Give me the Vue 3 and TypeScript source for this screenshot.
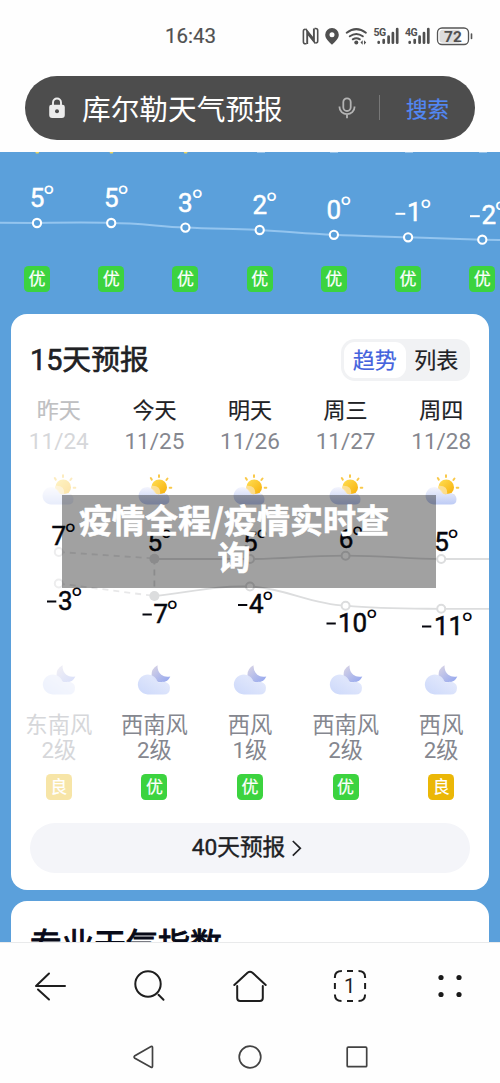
<script setup lang="ts">
interface Hour { x: number; y: number; minus?: number; digit: string }
interface Day {
  name: string; date: string; wind: string; level: string; air: string
  past?: boolean
}
interface Label { digits: string; minus?: number; x: number; y: number; w: number }

const hours: Hour[] = [
  { x: 37, y: 223, digit: '5' },
  { x: 111.2, y: 223, digit: '5' },
  { x: 185.4, y: 227.6, digit: '3' },
  { x: 259.7, y: 230, digit: '2' },
  { x: 333.9, y: 234.8, digit: '0' },
  { x: 408.1, y: 237.3, digit: '1', minus: 395.5 },
  { x: 482.3, y: 239.7, digit: '2', minus: 470 },
]

const days: Day[] = [
  { name: '昨天', date: '11/24', wind: '东南风', level: '2级', air: '良', past: true },
  { name: '今天', date: '11/25', wind: '西南风', level: '2级', air: '优' },
  { name: '明天', date: '11/26', wind: '西风', level: '1级', air: '优' },
  { name: '周三', date: '11/27', wind: '西南风', level: '2级', air: '优' },
  { name: '周四', date: '11/28', wind: '西风', level: '2级', air: '良' },
]

const labels: Label[] = [
  { digits: '7', x: 51.5, y: 545, w: 14 },
  { digits: '5', x: 147.5, y: 551, w: 14 },
  { digits: '5', x: 243, y: 551, w: 14 },
  { digits: '6', x: 338.7, y: 548, w: 14 },
  { digits: '5', x: 434.2, y: 551, w: 14 },
  { digits: '3', minus: 47, x: 58, y: 609.5, w: 14 },
  { digits: '7', minus: 142.5, x: 153.5, y: 622.5, w: 14 },
  { digits: '4', minus: 238, x: 249, y: 613, w: 14 },
  { digits: '10', minus: 326.5, x: 338, y: 631.5, w: 29 },
  { digits: '11', minus: 422, x: 434, y: 634.5, w: 28.5 },
]
</script>

<template>
  <div class="screen">
    <header class="top">
      <div class="status">
        <span class="clock">16:43</span>
        <svg class="signals" viewBox="300 24 175 24" width="175" height="24">
          <g fill="none" stroke="#505050">
            <path d="M306.500 43.700h-1.300q-1.800 0-1.800-2v-10.500q0-2 1.800-2M314.500 28.500h1.300q1.900 0 1.900 2v10.500q0 2-1.900 2" stroke-width="1.600" />
            <path d="M307.200 44V32l6.700 8.500V28.500" stroke-width="1.900" />
            <path d="M305.500 28.800l8.500 10.700M307.500 33.500l8 10" stroke-width="1.700" />
          </g>
          <g fill="#505050">
            <path d="M332 28a6.700 6.700 0 0 0-6.800 6.700c0 4.300 4.200 7.300 6.800 10 2.600-2.700 6.800-5.700 6.800-10A6.700 6.700 0 0 0 332 28zm0 4.300a2.500 2.500 0 1 1 0 5 2.500 2.500 0 0 1 0-5z" fill-rule="evenodd" />
            <circle cx="356.300" cy="42.500" r="2" />
            <path d="M362.700 40.200v4.600l-2.200-2.300zM364 40.200v4.600l2.200-2.300z" />
          </g>
          <g fill="none" stroke="#505050" stroke-width="2" stroke-linecap="round">
            <path d="M346.700 32.700q9.600-7.200 19.200 0M349.800 36.300q6.500-4.600 13 0M352.800 39.300q3.500-2.300 7 0" />
          </g>
          <g stroke="#505050" stroke-width="2.700" stroke-linecap="round">
            <path d="M378.700 42.200v.5M383.700 40v2.700M388.600 36.500v6.200M392.900 33v9.700M397.200 29v13.700" />
            <path d="M409.700 42.200v.5M414.700 40v2.700M419.600 36.500v6.200M424 33v9.700M428.300 29v13.700" />
          </g>
          <text class="net" x="373.500" y="36">5G</text>
          <text class="net" x="405" y="36">4G</text>
          <rect x="437.500" y="28" width="31" height="16.500" rx="4.500" fill="#fff" stroke="#555" stroke-width="1.300" />
          <path d="M443 29.800h16.500v13h-16.500q-3.600 0-3.600-3.500v-6q0-3.500 3.600-3.500z" fill="#dcdcdc" />
          <path d="M471.500 34v4.500" stroke="#555" stroke-width="1.600" stroke-linecap="round" />
          <text class="battery" x="453" y="41.700">72</text>
        </svg>
      </div>
      <div class="search">
        <svg class="lock" viewBox="0 0 18 22" width="18" height="22">
          <path d="M5 9V5.500a4 4 0 0 1 8 0V9" fill="none" stroke="#ececec" stroke-width="1.900" />
          <path d="M3.500 7.800h11q2.300 0 2.300 2.300v8q0 3-3 3H4.200q-3 0-3-3v-8q0-2.300 2.300-2.300z" fill="#ececec" />
          <circle cx="9" cy="14.300" r="2" fill="#4d4d4d" />
        </svg>
        <span class="query">库尔勒天气预报</span>
        <svg class="mic" viewBox="0 0 18 22" width="18" height="22" fill="none" stroke="#b4b4b4" stroke-width="1.800">
          <rect x="5.300" y="1.300" width="7.400" height="12.700" rx="3.700" />
          <path d="M1.500 9.500v.8a7.500 6.800 0 0 0 15 0v-.8M9 17.200v4" />
        </svg>
        <i class="divider"></i>
        <span class="go">搜索</span>
      </div>
    </header>

    <main class="content">
      <section class="hourly">
        <svg class="hour-chart" viewBox="0 152 500 114" width="500" height="114">
          <g fill="#e8d35f">
            <rect x="35.500" y="151.500" width="3.500" height="2" rx="1" />
            <rect x="109.700" y="151.500" width="3.500" height="2" rx="1" />
            <rect x="183.900" y="151.500" width="3.500" height="2" rx="1" />
          </g>
          <path d="M257 152h8M330 152h8M405 152h8M479 152h8" stroke="#d5e7f7" />
          <path d="M0 222.700L37 223C70 222.500 90 222.300 111 223C138 223 158 226.300 185 227.600C212 229 233 228.700 260 230C287 231.500 307 233.600 334 234.800C360 236.200 382 236.300 408 237.300L482 239.700L500 240" fill="none" stroke="#94c5ef" stroke-width="2" />
          <g v-for="h in hours" :key="h.x">
            <circle :cx="h.x" :cy="h.y" r="4.100" fill="#5aa0db" stroke="#fff" stroke-width="2.100" />
            <path v-if="h.minus" :d="`M${h.minus} ${h.y - 23.500}h9.800`" stroke="#fff" stroke-width="2" />
            <text class="temp light" :x="h.minus ? h.minus + 11.500 : h.x - 7.300" :y="h.y - 16">{{ h.digit }}</text>
            <text class="deg light" :x="h.minus ? h.minus + 24.500 : h.x + 6" :y="h.y - 18.500">°</text>
          </g>
        </svg>
        <div class="hour-air">
          <span v-for="h in hours" :key="h.x"><b class="badge">优</b></span>
        </div>
      </section>

      <section class="card forecast">
        <div class="card-head">
          <h2>15天预报</h2>
          <div class="toggle"><span class="active">趋势</span><span>列表</span></div>
        </div>
        <div class="days">
          <div v-for="d in days" :key="d.date" class="day" :class="{ past: d.past }">
            <span class="name">{{ d.name }}</span>
            <span class="date">{{ d.date }}</span>
            <svg class="weather" viewBox="0 0 36 34" width="36" height="34">
              <defs>
                <linearGradient id="sun" x1="0" x2="1" y2="1"><stop stop-color="#ffdf54" /><stop offset="1" stop-color="#f7ae08" /></linearGradient>
                <linearGradient id="cloud" x2="0" y2="1"><stop stop-color="#f4f5fd" /><stop offset="1" stop-color="#bdcbf5" /></linearGradient>
              </defs>
              <path d="M22 2.300v1.700M13.800 5l1 1.600M30.500 5.500l-1.100 1.500M32.700 14.700h1.600M29.300 22l1 1.300" stroke="#f9c94a" stroke-width="2" stroke-linecap="round" />
              <circle cx="22.200" cy="14.300" r="7.800" fill="url(#sun)" />
              <path d="M11 31.500a8.700 8.700 0 1 1 4.700-15.500q2.300 1.600 3.300 4.200 2 1.700 5.200.5a6 6 0 0 1 8.300 5.600q0 5.200-5.500 5.200z" fill="url(#cloud)" />
              <path d="M14.300 12.800q9.500-.8 9 8-4 1.500-6-1.800-1-2.200-3.200-3.400z" fill="#fce3a8" opacity=".8" />
            </svg>
          </div>
        </div>
        <svg class="trend" viewBox="11 507 478 153" width="478" height="153">
          <g fill="none" stroke="#dcddde" stroke-width="1.800">
            <path d="M58.800 552L154.400 558.500M58.800 583.500L154.400 596" stroke-dasharray="6 5" stroke="#e8e8e9" />
            <path d="M154.400 558.500V596" stroke-dasharray="6 5" />
            <path d="M154.400 559H250C290 559 300 555.700 345.600 555.700C385 555.700 405 558.700 441.200 559H489" />
            <path d="M154.400 596C185 593.500 215 585 250 586.500C285 588 310 604 345.600 605.700C380 609 405 608.600 441.200 608.800H489" />
          </g>
          <g fill="#fff" stroke="#dcddde" stroke-width="2">
            <circle cx="58.800" cy="552" r="4" stroke="#ededee" /><circle cx="58.800" cy="583.500" r="4" stroke="#ededee" />
            <circle cx="250" cy="559" r="4" /><circle cx="345.600" cy="555.700" r="4" /><circle cx="441.200" cy="559" r="4" />
            <circle cx="250" cy="586.500" r="4" /><circle cx="345.600" cy="605.700" r="4" /><circle cx="441.200" cy="608.800" r="4" />
          </g>
          <circle cx="154.400" cy="558.800" r="5" fill="#dcddde" /><circle cx="154.400" cy="596" r="5" fill="#dcddde" />
          <g v-for="(l, i) in labels" :key="i">
            <path v-if="l.minus" :d="`M${l.minus} ${l.y - 8}h9.300`" stroke="#06070e" stroke-width="2" />
            <text class="temp" :x="l.x" :y="l.y">{{ l.digits }}</text>
            <text class="deg" :x="l.x + l.w - 1" :y="l.y - 2.500">°</text>
          </g>
        </svg>
        <div class="days">
          <div v-for="d in days" :key="d.date" class="day night" :class="{ past: d.past }">
            <svg class="moon" viewBox="0 0 36 32" width="36" height="32">
              <defs>
                <linearGradient id="crescent" x2="1" y2="1"><stop stop-color="#dcd6e4" /><stop offset="1" stop-color="#91a5f0" /></linearGradient>
                <linearGradient id="nightcloud" x1="1" x2="0" y2="1"><stop stop-color="#e9edfc" /><stop offset="1" stop-color="#c9d6fa" /></linearGradient>
              </defs>
              <path d="M21.500 1.200q-6.500 3.500-6 10.500Q18.500 18.300 26 18.300q6-.3 8.300-5.800-5.500 1.200-9-1.800-4.100-3.500-3.800-9.500z" fill="url(#crescent)" />
              <path d="M12 30.500a10 10 0 1 1 7-17q1.800 1.700 2.600 4.400 2.200.8 4.700-.2c5.300-.3 7.700 3 7.700 6q0 6.800-6.700 6.800z" fill="url(#nightcloud)" opacity=".95" />
            </svg>
            <span class="wind">{{ d.wind }}</span>
            <span class="wind">{{ d.level }}</span>
            <b class="badge" :class="{ fair: d.air === '良' }">{{ d.air }}</b>
          </div>
        </div>
        <div class="more">
          <span>40天预报</span>
          <svg viewBox="0 0 11 18" width="11" height="18"><path d="M1.800 2l7.500 7.300-7.500 7.300" fill="none" stroke="#222326" stroke-width="1.700" /></svg>
        </div>
        <div class="notice">疫情全程/疫情实时查<br>询</div>
      </section>

      <section class="card index"><h2>专业天气指数</h2></section>
    </main>

    <nav class="toolbar">
      <svg viewBox="0 0 40 40" width="40" height="40"><path d="M6 20h29M6 20L19 7.500M8 23.500l11 10" /></svg>
      <svg viewBox="0 0 40 40" width="40" height="40"><circle cx="18" cy="18" r="12.700" /><path d="M28.500 28.800l5 5" /></svg>
      <svg viewBox="0 0 40 40" width="40" height="40"><path d="M4.300 19L17.500 6.700q2.500-2 5 0L35.700 19M7.200 20v12q0 3 3 3h19.600q3 0 3-3V20" /></svg>
      <svg viewBox="0 0 40 40" width="40" height="40">
        <path d="M4.900 12v-1q0-6 7-6M28.500 5q6.600 0 6.600 6v1M35.100 28.500q0 6.500-6.600 6.500M11.500 35q-6.600 0-6.600-6.500M17 5h6M17 35h6M4.900 17v6M35.100 17v6" stroke-linecap="butt" />
        <text class="tabs" x="19.500" y="26.700">1</text>
      </svg>
      <svg viewBox="0 0 40 40" width="40" height="40"><g fill="#1a1a1a" stroke="none"><circle cx="11" cy="11.500" r="2.600" /><circle cx="29" cy="11.500" r="2.600" /><circle cx="11" cy="28.500" r="2.600" /><circle cx="29" cy="28.500" r="2.600" /></g></svg>
    </nav>
    <nav class="system">
      <svg viewBox="0 0 26 26" width="26" height="26"><path d="M3.500 12q-1 1 0 2l16.500 9.300q1.500.5 1.500-1V3.500q0-1.500-1.500-1z" /></svg>
      <svg viewBox="0 0 26 26" width="26" height="26"><circle cx="13" cy="13" r="10.800" /></svg>
      <svg viewBox="0 0 26 26" width="26" height="26"><rect x="3.200" y="3.200" width="19.500" height="19.500" rx="1" /></svg>
    </nav>
  </div>
</template>

<style>
body { background: #fff; }
</style>

<style scoped>
.screen {
  width: 500px; height: 1083px; overflow: hidden; display: flex; flex-direction: column;
  background: #fefefe; color: #202124; font-family: "Noto Sans CJK SC", sans-serif; line-height: 1;
}
svg { display: block; flex: none; }
h2 { margin: 0; font-weight: 400; }
.top { height: 152px; flex: none; }
.status { height: 76px; box-sizing: border-box; padding: 0 25px 4px 165px; display: flex; align-items: center; justify-content: space-between; }
.clock { font-family: Roboto, sans-serif; font-size: 20.500px; line-height: 23px; color: #505050; -webkit-text-stroke: .2px; padding-top: 1px; }
.net { font: 700 10.500px Roboto, sans-serif; fill: #505050; letter-spacing: -.6px; }
.battery { font: 700 15.500px Roboto, sans-serif; fill: #505050; text-anchor: middle; }
.search {
  height: 63.500px; margin: 0 25px; box-sizing: border-box; padding: 0 26px 0 22.500px; border-radius: 32px;
  background: #4d4d4d; display: flex; align-items: center;
}
.query { margin-left: 16.500px; padding-top: 2px; font-size: 28.700px; color: #fff; flex: 1; white-space: nowrap; }
.divider { width: 1px; height: 25px; background: #777; margin: 0 26px 0 22.500px; }
.go { font-size: 21.500px; color: #5288f5; -webkit-text-stroke: .2px; }
.content { height: 790px; flex: none; overflow: hidden; background: #5ba0db; }
.hourly { height: 162px; overflow: hidden; }
.hour-air { display: flex; }
.hour-air span { flex: none; width: 74.200px; display: flex; justify-content: center; }
.badge {
  width: 26px; height: 26px; border-radius: 4.500px; background: #3cd33f; color: #fff;
  font-weight: 400; font-size: 17px; line-height: 23px; text-align: center; -webkit-text-stroke: .2px;
}
.badge.fair { background: #ebb707; }
.temp { font-family: Roboto, sans-serif; font-size: 26px; fill: #06070e; stroke: #06070e; stroke-width: .5px; }
.deg { font-family: "Noto Sans", sans-serif; font-size: 27px; fill: #06070e; }
.light { fill: #fff; }
.temp.light { stroke: #fff; }
.card { position: relative; margin: 0 11px; background: #fff; border-radius: 16px; }
.forecast { height: 575.500px; }
.card-head { height: 81px; box-sizing: border-box; padding: 25px 19px 0; display: flex; justify-content: space-between; align-items: flex-start; }
.card-head h2 { font-family: Roboto, "Noto Sans CJK SC", sans-serif; font-size: 28.800px; line-height: 42px; -webkit-text-stroke: .6px; }
.toggle { width: 129px; height: 42px; box-sizing: border-box; padding: 3px; border-radius: 14px; background: #f1f2f4; display: flex; font-size: 22px; line-height: 33px; text-align: center; -webkit-text-stroke: .2px; }
.toggle span { flex: 1; }
.toggle .active { background: #fff; border-radius: 11px; color: #4463dd; height: 36px; }
.days { display: flex; }
.day { flex: 1; display: flex; flex-direction: column; align-items: center; white-space: nowrap; }
.name { height: 31px; line-height: 27px; font-size: 22px; -webkit-text-stroke: .2px; }
.date { height: 31px; line-height: 31px; font-family: Roboto, sans-serif; font-size: 22.500px; color: #85878f; }
.weather { margin: 16px 0 0 1px; }
.past .name { color: #bfc0c2; }
.past .date, .past .wind { color: #d6d7da; }
.past .weather, .past .moon, .past .badge { opacity: .35; }
.night { padding-top: 4px; }
.moon { margin-bottom: 16px; }
.wind { height: 24.500px; line-height: 26px; font-family: Roboto, "Noto Sans CJK SC", sans-serif; font-size: 22.300px; color: #85878f; }
.night .badge { margin-top: 13px; }
.more {
  margin: 22.500px 19px 0; height: 50.500px; box-sizing: border-box; padding-right: 6px; border-radius: 26px; background: #f4f5f9;
  display: flex; align-items: center; justify-content: center; gap: 6px;
  font-family: Roboto, "Noto Sans CJK SC", sans-serif; font-size: 22.700px; line-height: 26px; -webkit-text-stroke: .4px;
}
.notice {
  position: absolute; left: 51px; top: 181px; width: 374px; height: 92.500px; box-sizing: border-box;
  padding: 6px 30px 0 0; background: rgba(0, 0, 0, .37); color: #fff; font-size: 33px; font-weight: 700;
  line-height: 37px; text-align: center; white-space: nowrap; -webkit-text-stroke: .6px;
}
.index { margin-top: 11.500px; height: 60px; padding: 22px 19px; box-sizing: border-box; }
.index h2 { font-size: 32px; line-height: 38px; color: #080a18; -webkit-text-stroke: 1px; white-space: nowrap; }
.toolbar { height: 88px; flex: none; display: flex; justify-content: space-around; align-items: center; padding-bottom: 2px; background: #fefefe; border-top: 1px solid #e9eaeb; box-sizing: border-box; }
.toolbar svg { fill: none; stroke: #1e1e1e; stroke-width: 2; stroke-linecap: round; stroke-linejoin: round; }
.tabs { font: 20px Roboto, sans-serif; fill: #1e1e1e; stroke: none; text-anchor: middle; }
.system { height: 53px; display: flex; justify-content: center; align-items: center; gap: 80.500px; }
.system svg { fill: none; stroke: #424242; stroke-width: 1.700; }
</style>
